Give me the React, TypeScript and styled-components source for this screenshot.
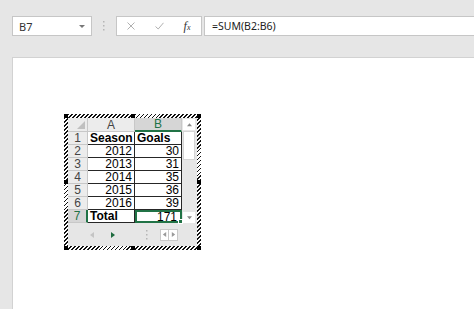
import { Fragment } from 'react';
import styled, { createGlobalStyle, css } from 'styled-components';

const GlobalStyle = createGlobalStyle`
  html, body {
    margin: 0;
    padding: 0;
  }
  body {
    width: 474px;
    height: 309px;
    overflow: hidden;
    background: #e6e6e6;
    font-family: "Noto Sans", "Open Sans", sans-serif;
  }
`;

const GREEN = '#217346';

const Window = styled.div`
  display: flex;
  flex-direction: column;
  width: 474px;
  height: 309px;
`;

const FormulaBar = styled.div`
  display: flex;
  align-items: flex-start;
  height: 57px;
  padding: 16px 0 0 12px;
  box-sizing: border-box;
  flex-shrink: 0;
`;

const NameBox = styled.div`
  display: flex;
  align-items: center;
  justify-content: space-between;
  width: 80px;
  height: 20px;
  box-sizing: border-box;
  padding: 0 6px 0 6px;
  background: #fff;
  border: 1px solid #c6c6c6;
  font-size: 11px;
  color: #333;
`;

const DropArrow = styled.span`
  width: 0;
  height: 0;
  border-left: 3px solid transparent;
  border-right: 3px solid transparent;
  border-top: 3px solid #777;
`;

const Grip = styled.div`
  display: flex;
  align-items: center;
  justify-content: center;
  width: 24px;
  height: 20px;
`;

const ButtonGroup = styled.div`
  display: flex;
  width: 86px;
  height: 20px;
  box-sizing: border-box;
  background: #fff;
  border: 1px solid #c6c6c6;
`;

const BarButton = styled.div`
  display: flex;
  align-items: center;
  justify-content: center;
  width: 28px;
  height: 100%;
`;

const Fx = styled.span`
  font-family: "Liberation Serif", "DejaVu Serif", serif;
  font-style: italic;
  font-size: 12px;
  color: #333;

  sub {
    font-size: 8px;
    vertical-align: baseline;
  }
`;

const FormulaInput = styled.div`
  flex: 1;
  display: flex;
  align-items: center;
  height: 20px;
  margin-left: 2px;
  padding-left: 7px;
  box-sizing: border-box;
  background: #fff;
  border: 1px solid #c6c6c6;
  border-right: none;
  font-size: 10.5px;
  color: #222;
`;

const Sheet = styled.div`
  flex: 1;
  margin-left: 12px;
  padding: 56px 0 0 51px;
  background: #fff;
  border-top: 1px solid #d2d2d2;
  border-left: 1px solid #d2d2d2;
`;

const EmbedFrame = styled.div`
  position: relative;
  width: 137px;
  height: 136px;
  box-sizing: border-box;
  padding: 4px;
  background: repeating-linear-gradient(135deg, #111 0 1.2px, #fff 1.2px 2.8px);
`;

const Handle = styled.span<{ $h: 'l' | 'c' | 'r'; $v: 't' | 'm' | 'b' }>`
  position: absolute;
  width: 4px;
  height: 4px;
  background: #000;
  left: ${(p) => (p.$h === 'l' ? '0' : p.$h === 'c' ? '67px' : '133px')};
  top: ${(p) => (p.$v === 't' ? '0' : p.$v === 'm' ? '66px' : '132px')};
`;

const Inner = styled.div`
  display: flex;
  flex-direction: column;
  width: 129px;
  height: 128px;
  background: #e6e6e6;
`;

const GridArea = styled.div`
  display: flex;
`;

const Grid = styled.div`
  display: grid;
  grid-template-columns: 20px 47px 47px;
  grid-template-rows: 14px repeat(7, 13px);
`;

const Corner = styled.div`
  position: relative;
  background: #ececec;
  border-right: 1px solid #c8c8c8;
  border-bottom: 1px solid #c8c8c8;

  &::after {
    content: '';
    position: absolute;
    right: 2px;
    bottom: 2px;
    border-left: 8px solid transparent;
    border-bottom: 8px solid #c0c0c0;
  }
`;

const ColHeader = styled.div<{ $active?: boolean }>`
  display: flex;
  align-items: center;
  justify-content: center;
  box-sizing: border-box;
  background: ${(p) => (p.$active ? '#d6d6d6' : '#ececec')};
  color: ${(p) => (p.$active ? GREEN : '#444')};
  border-right: 1px solid #c8c8c8;
  border-bottom: ${(p) => (p.$active ? `2px solid ${GREEN}` : '1px solid #c8c8c8')};
  font-family: "Liberation Sans", Arial, sans-serif;
  font-size: 12px;
`;

const RowHeader = styled.div<{ $active?: boolean }>`
  display: flex;
  align-items: center;
  justify-content: center;
  box-sizing: border-box;
  background: ${(p) => (p.$active ? '#d6d6d6' : '#ececec')};
  color: ${(p) => (p.$active ? GREEN : '#444')};
  border-bottom: 1px solid #c8c8c8;
  border-right: ${(p) => (p.$active ? `2px solid ${GREEN}` : '1px solid #c8c8c8')};
  font-family: "Liberation Sans", Arial, sans-serif;
  font-size: 12px;
`;

const Cell = styled.div<{ $bold?: boolean; $num?: boolean; $active?: boolean }>`
  position: relative;
  display: flex;
  align-items: center;
  justify-content: ${(p) => (p.$num ? 'flex-end' : 'flex-start')};
  box-sizing: border-box;
  padding: 0 2px;
  background: #fff;
  color: #000;
  font-family: "Liberation Sans", Arial, sans-serif;
  font-size: 12px;
  font-weight: ${(p) => (p.$bold ? 700 : 400)};
  border-right: 1px solid #262626;
  border-bottom: 1px solid #262626;
  line-height: 12px;

  ${(p) =>
    p.$active &&
    css`
      border: 2px solid ${GREEN};
      padding: 0 3px 0 1px;

      &::after {
        content: '';
        position: absolute;
        right: -3px;
        bottom: -3px;
        width: 3px;
        height: 3px;
        background: ${GREEN};
        border: 1px solid #fff;
      }
    `}
`;

const ScrollBar = styled.div`
  display: flex;
  flex-direction: column;
  width: 15px;
  box-sizing: border-box;
  padding: 0 2px 0 1px;
`;

const ScrollButton = styled.div`
  display: flex;
  align-items: center;
  justify-content: center;
  height: 11px;
  margin-top: 1px;
  background: #fff;
`;

const Thumb = styled.div`
  height: 27px;
  margin-top: 1px;
  background: #fff;
  border: 1px solid #d4d4d4;
`;

const Track = styled.div`
  flex: 1;
`;

const Tabs = styled.div`
  display: flex;
  align-items: center;
  flex: 1;
  padding-left: 21px;
`;

const Spacer = styled.span<{ $w: number }>`
  width: ${(p) => p.$w}px;
`;

const NavBox = styled.div`
  display: flex;
  align-items: center;
  justify-content: center;
  width: 9px;
  height: 12px;
  background: #fff;
  border: 1px solid #c8c8c8;
  box-sizing: border-box;

  & + & {
    border-left: none;
  }
`;

const Tri = ({ dir, color, size = 6 }: { dir: 'l' | 'r' | 'u' | 'd'; color: string; size?: number }) => {
  const pts = {
    l: '5,0 5,6 1,3',
    r: '1,0 1,6 5,3',
    u: '0,5 6,5 3,1.5',
    d: '0,1.5 6,1.5 3,5',
  }[dir];
  return (
    <svg width={size} height={size} viewBox="0 0 6 6">
      <polygon points={pts} fill={color} />
    </svg>
  );
};

const Dots = () => (
  <svg width="2" height="12" viewBox="0 0 2 12">
    <rect x="0" y="1" width="1.5" height="1.5" fill="#b5b5b5" />
    <rect x="0" y="5" width="1.5" height="1.5" fill="#b5b5b5" />
    <rect x="0" y="9" width="1.5" height="1.5" fill="#b5b5b5" />
  </svg>
);

const rows: [string, string, boolean?][] = [
  ['Season', 'Goals', true],
  ['2012', '30'],
  ['2013', '31'],
  ['2014', '35'],
  ['2015', '36'],
  ['2016', '39'],
];

export default function App() {
  return (
    <Window>
      <GlobalStyle />
      <FormulaBar>
        <NameBox>
          B7
          <DropArrow />
        </NameBox>
        <Grip>
          <Dots />
        </Grip>
        <ButtonGroup>
          <BarButton>
            <svg width="8" height="8" viewBox="0 0 8 8">
              <path d="M0.5 0.5 L7.5 7.5 M7.5 0.5 L0.5 7.5" stroke="#b0b0b0" strokeWidth="1" />
            </svg>
          </BarButton>
          <BarButton>
            <svg width="9" height="8" viewBox="0 0 9 8">
              <path d="M0.5 4.5 L3.2 7 L8.5 0.8" stroke="#b0b0b0" strokeWidth="1" fill="none" />
            </svg>
          </BarButton>
          <BarButton>
            <Fx>
              f<sub>x</sub>
            </Fx>
          </BarButton>
        </ButtonGroup>
        <FormulaInput>=SUM(B2:B6)</FormulaInput>
      </FormulaBar>

      <Sheet>
        <EmbedFrame>
          <Inner>
            <GridArea>
              <Grid>
                <Corner />
                <ColHeader>A</ColHeader>
                <ColHeader $active>B</ColHeader>
                {rows.map(([a, b, head], i) => (
                  <Fragment key={i}>
                    <RowHeader>{i + 1}</RowHeader>
                    <Cell $bold={head} $num={!head}>
                      {a}
                    </Cell>
                    <Cell $bold={head} $num={!head}>
                      {b}
                    </Cell>
                  </Fragment>
                ))}
                <RowHeader $active>7</RowHeader>
                <Cell $bold>Total</Cell>
                <Cell $num $active>
                  171
                </Cell>
              </Grid>
              <ScrollBar>
                <ScrollButton>
                  <Tri dir="u" color="#8a8a8a" size={5} />
                </ScrollButton>
                <Thumb />
                <Track />
                <ScrollButton>
                  <Tri dir="d" color="#8a8a8a" size={5} />
                </ScrollButton>
              </ScrollBar>
            </GridArea>
            <Tabs>
              <Tri dir="l" color="#c4c4c4" />
              <Spacer $w={15} />
              <Tri dir="r" color="#1e6b3f" />
              <Spacer $w={30} />
              <Dots />
              <Spacer $w={12} />
              <NavBox>
                <Tri dir="l" color="#9a9a9a" size={5} />
              </NavBox>
              <NavBox>
                <Tri dir="r" color="#9a9a9a" size={5} />
              </NavBox>
            </Tabs>
          </Inner>
          <Handle $h="l" $v="t" />
          <Handle $h="c" $v="t" />
          <Handle $h="r" $v="t" />
          <Handle $h="l" $v="m" />
          <Handle $h="r" $v="m" />
          <Handle $h="l" $v="b" />
          <Handle $h="c" $v="b" />
          <Handle $h="r" $v="b" />
        </EmbedFrame>
      </Sheet>
    </Window>
  );
}
